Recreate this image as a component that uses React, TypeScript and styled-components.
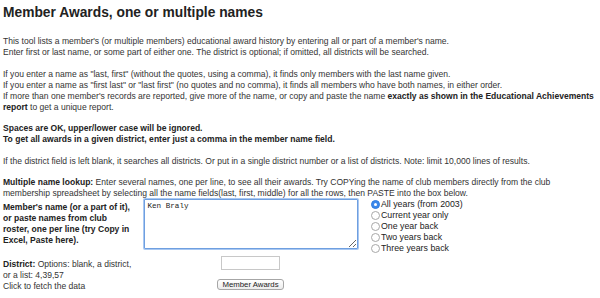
import React, { FC } from 'react'
import styled, { createGlobalStyle } from 'styled-components'

const GlobalStyle = createGlobalStyle`
	html, body {
		margin: 0;
		background: #fff;
	}
	body {
		font-family: 'Liberation Sans', Arial, Helvetica, sans-serif;
		color: #333;
	}
`

const yearOptions = [
	'All years (from 2003)',
	'Current year only',
	'One year back',
	'Two years back',
	'Three years back',
]

const App: FC = () => {
	return (
		<>
			<GlobalStyle />
			<Page>
				<Title>Member Awards, one or multiple names</Title>
				<Para>
					This tool lists a member's (or multiple members) educational award history by entering all or part of a member's name.
					<br />
					Enter first or last name, or some part of either one. The district is optional; if omitted, all districts will be searched.
				</Para>
				<Para>
					If you enter a name as "last, first" (without the quotes, using a comma), it finds only members with the last name given.
					<br />
					If you enter a name as "first last" or "last first" (no quotes and no comma), it finds all members who have both names, in either order.
					<br />
					If more than one member's records are reported, give more of the name, or copy and paste the name{' '}
					<b>exactly as shown in the Educational Achievements report</b> to get a unique report.
				</Para>
				<Para>
					<b>Spaces are OK, upper/lower case will be ignored.</b>
					<br />
					<b>To get all awards in a given district, enter just a comma in the member name field.</b>
				</Para>
				<Para>
					If the district field is left blank, it searches all districts. Or put in a single district number or a list of districts. Note: limit 10,000 lines of results.
				</Para>
				<Para>
					<b>Multiple name lookup:</b> Enter several names, one per line, to see all their awards. Try COPYing the name of club members directly from the club membership spreadsheet by selecting all the name fields(last, first, middle) for all the rows, then PASTE into the box below.
				</Para>
				<Form>
					<Label $top={2.5}>
						<b>Member's name (or a part of it), or paste names from club roster, one per line (try Copy in Excel, Paste here).</b>
					</Label>
					<FieldCell>
						<NameBox defaultValue='Ken Braly' spellCheck={false} />
					</FieldCell>
					<RadioList>
						{yearOptions.map((option, i) => (
							<RadioRow key={option}>
								<Radio $checked={i === 0} />
								{option}
							</RadioRow>
						))}
					</RadioList>
					<Label $top={5}>
						<b>District:</b> Options: blank, a district, or a list: 4,39,57
					</Label>
					<FieldCell $top={2}>
						<DistrictBox />
					</FieldCell>
					<Spacer />
					<Label $top={0}>Click to fetch the data</Label>
					<FieldCell $top={-2}>
						<SubmitButton>Member Awards</SubmitButton>
					</FieldCell>
					<Spacer />
				</Form>
			</Page>
		</>
	)
}

export default App

const Page = styled.div`
	padding: 5px 3px 0;
	width: 594px;
`
const Title = styled.h2`
	margin: 0 0 15px;
	font-size: 13.8px;
	line-height: 16px;
	font-weight: bold;
	color: #222;
`
const Para = styled.p`
	margin: 0 0 10.5px;
	font-size: 8.55px;
	line-height: 11px;

	b {
		color: #222;
	}

	&:last-of-type {
		margin-bottom: 0;
	}
`
const Form = styled.div`
	display: grid;
	grid-template-columns: 140px 215px 1fr;
	align-items: start;
	font-size: 8.55px;
	line-height: 11px;
	margin-top: 0;
`
const Label = styled.div<{ $top: number }>`
	padding: ${props => props.$top}px 6px 0 0;
	width: 132px;

	b {
		color: #222;
	}
`
const FieldCell = styled.div<{ $top?: number }>`
	display: flex;
	justify-content: center;
	margin-top: ${props => props.$top || 0}px;
`
const Spacer = styled.div``
const NameBox = styled.textarea`
	box-sizing: border-box;
	width: 214px;
	height: 50px;
	margin: 0;
	padding: 2px 3px;
	border: 1px solid #6f9fe0;
	box-shadow: 0 0 0 1px #a9c8f2;
	border-radius: 1px;
	font-family: 'Liberation Mono', 'Courier New', monospace;
	font-size: 7.6px;
	line-height: 9px;
	color: #222;
	outline: none;
	resize: both;
`
const RadioList = styled.div`
	display: flex;
	flex-direction: column;
	padding: 0 0 0 13px;
	font-size: 8.8px;
	line-height: 11px;
	color: #222;
`
const RadioRow = styled.div`
	display: flex;
	align-items: center;
	height: 11px;
`
const Radio = styled.span<{ $checked: boolean }>`
	box-sizing: border-box;
	width: 9px;
	height: 9px;
	margin-right: 1px;
	border-radius: 50%;
	border: 1px solid ${props => (props.$checked ? '#2f7ce0' : '#a8a8a8')};
	background: ${props => (props.$checked ? '#3b88eb' : '#fff')};
	display: flex;
	align-items: center;
	justify-content: center;

	&::after {
		content: '';
		width: 3px;
		height: 3px;
		border-radius: 50%;
		background: #fff;
		display: ${props => (props.$checked ? 'block' : 'none')};
	}
`
const DistrictBox = styled.input`
	box-sizing: border-box;
	width: 59px;
	height: 14px;
	margin: 0;
	border: 1px solid #c8c8c8;
	border-radius: 0;
	outline: none;
`
const SubmitButton = styled.button`
	box-sizing: border-box;
	height: 11px;
	width: 67px;
	margin: 0;
	padding: 0;
	border: 1px solid #a6a6a6;
	border-radius: 3px;
	background: linear-gradient(#ffffff, #ececec);
	font-family: 'Liberation Sans', Arial, sans-serif;
	font-size: 7.8px;
	line-height: 9px;
	color: #222;
`
